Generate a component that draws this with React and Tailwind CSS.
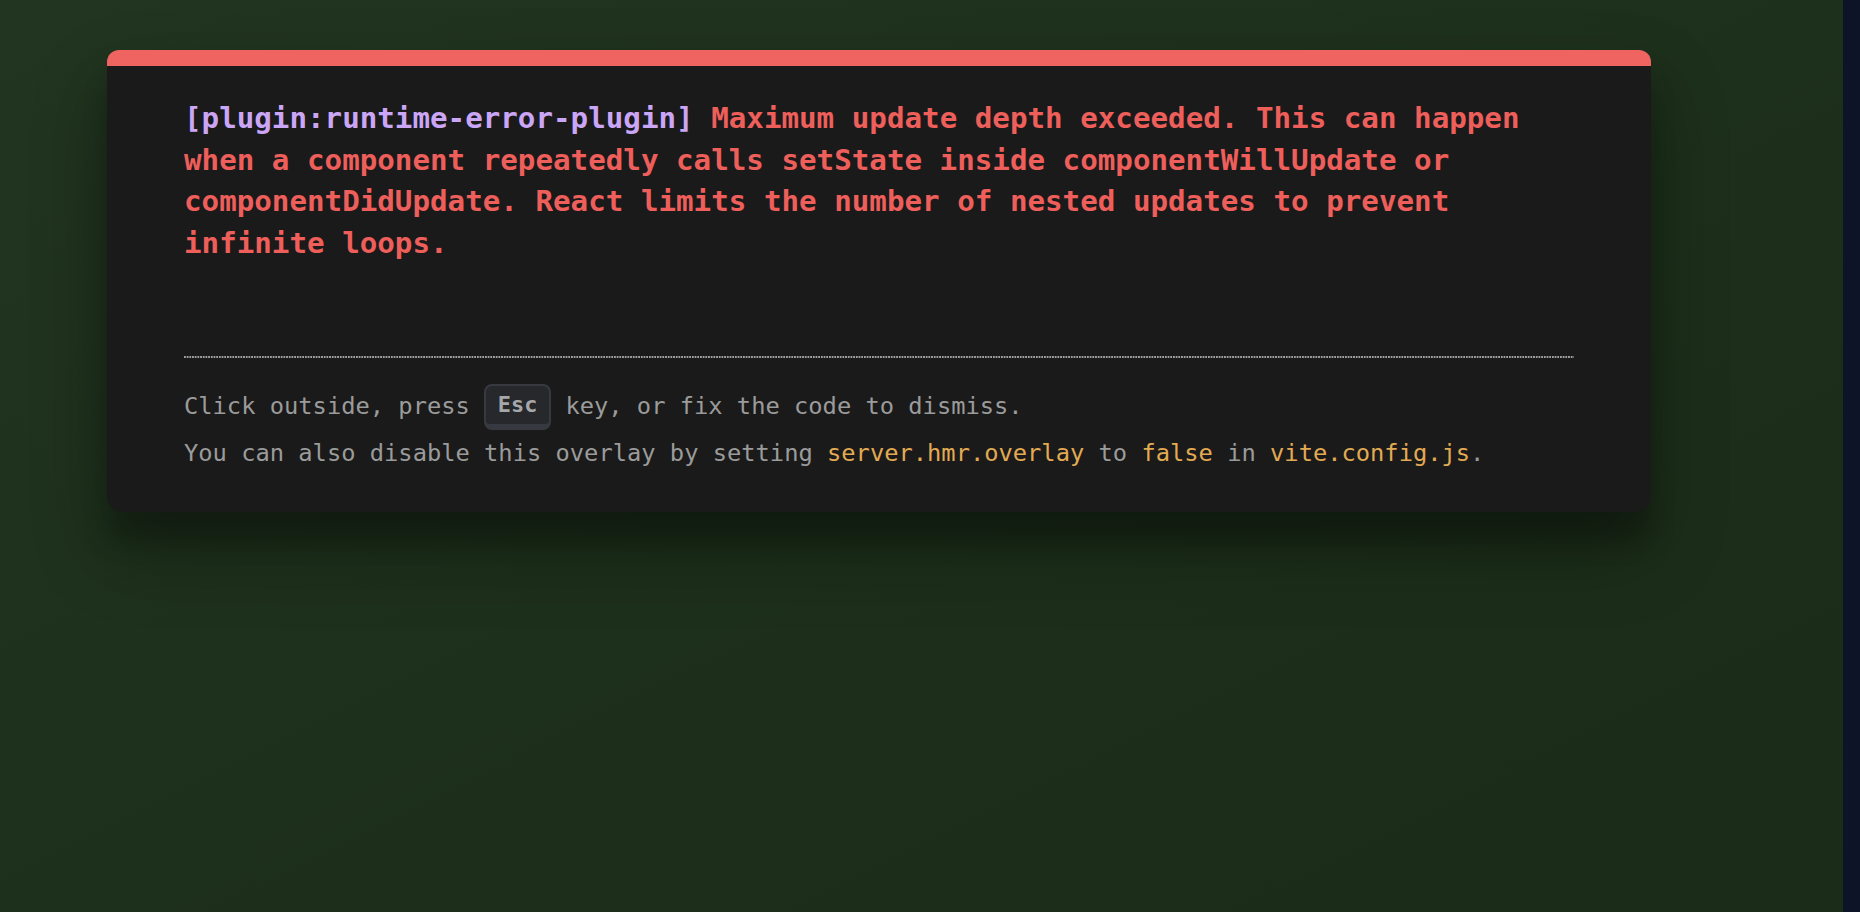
import React from "react";

const mono = { fontFamily: '"DejaVu Sans Mono", "Liberation Mono", monospace' };

export default function App() {
  return (
    <div className="flex h-[912px] w-[1860px] overflow-hidden" style={mono}>
      <div className="flex-1 bg-linear-to-br from-[#213520] via-[#1d301b] to-[#1b2c18]">
        <div className="ml-[107px] mt-[50px] w-[1544px] rounded-t-[12px] rounded-b-[16px] border-t-[16px] border-[#ef6461] bg-[#1a1a1a] px-[77px] pt-[32px] pb-[35px] shadow-[0_38px_76px_rgba(0,0,0,0.3),0_30px_24px_rgba(0,0,0,0.22)]">
          <pre
            className="m-0 whitespace-pre-wrap text-[29.2px] font-bold leading-[41.6px] text-[#ee5f5b]"
            style={mono}
          >
            <span className="text-[#cba6f7]">[plugin:runtime-error-plugin]</span>{" "}
            Maximum update depth exceeded. This can happen when a component repeatedly calls setState inside componentWillUpdate or componentDidUpdate. React limits the number of nested updates to prevent infinite loops.
          </pre>
          <div className="mt-[92px] h-[2px] bg-[linear-gradient(to_right,#a0a0a0_1.4px,transparent_1.4px)] bg-[length:2.7px_2px]" />
          <div className="pt-[25px] text-[23.74px] leading-[46.8px] text-[#9b9b9b]">
            <div>
              Click outside, press{" "}
              <span className="relative top-[1px] inline-flex h-[46px] w-[67px] items-center justify-center rounded-[8px] border-x-2 border-t-2 border-b-[6px] border-[#363940] bg-[#26282c] align-top text-[21.9px] font-bold text-[#a6a7ab]">
                Esc
              </span>{" "}
              key, or fix the code to dismiss.
            </div>
            <div>
              You can also disable this overlay by setting{" "}
              <span className="text-[#e2aa53]">server.hmr.overlay</span> to{" "}
              <span className="text-[#e2aa53]">false</span> in{" "}
              <span className="text-[#e2aa53]">vite.config.js</span>.
            </div>
          </div>
        </div>
      </div>
      <div className="w-[17px] bg-[#0e1428]" />
    </div>
  );
}
